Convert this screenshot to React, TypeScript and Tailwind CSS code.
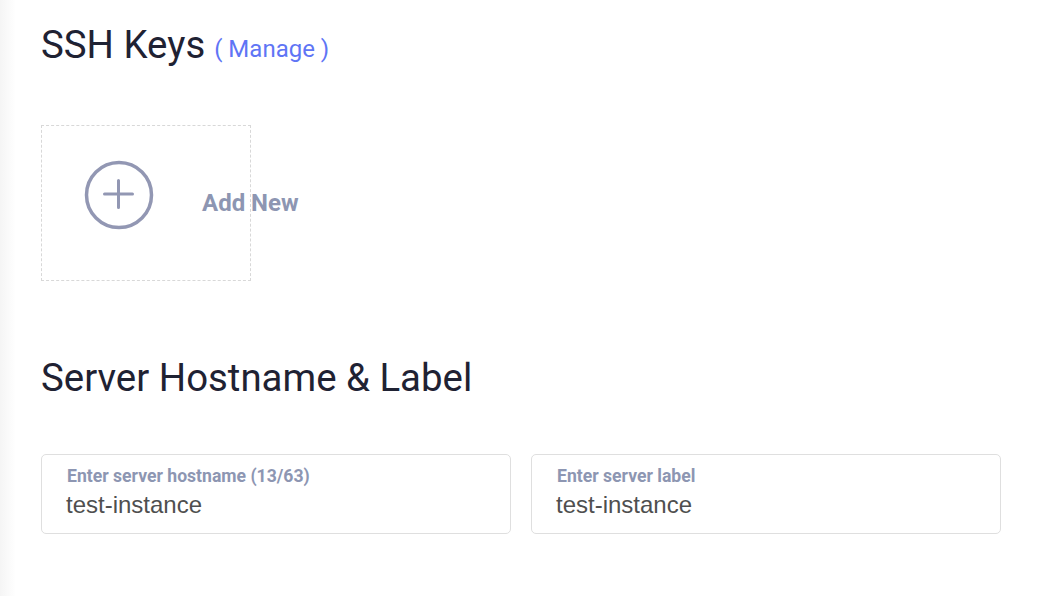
export default function App() {
  return (
    <main className="relative h-[596px] w-[1042px] overflow-hidden bg-white font-['Roboto',sans-serif]">
      {/* sidebar shadow on the left edge */}
      <div className="absolute inset-y-0 left-0 w-[16px] bg-gradient-to-r from-[#f5f5f5] to-white" />

      <div className="relative flex flex-col pl-[41px] pr-[41px] pt-[22px]">
        <div className="flex items-center">
          <h2 className="text-[38.4px] leading-[46px] font-normal text-[#1f2233]">SSH Keys</h2>
          <a href="#" className="ml-[9px] mt-[8px] text-[24px] leading-[32px] text-[#5f75f5]">( Manage )</a>
        </div>

        <div className="mt-[57px] flex h-[156px] w-[210px] border border-dashed border-[#d8d8d8] pl-[42px]">
          <svg className="mt-[34px] h-[70px] w-[70px] shrink-0" viewBox="0 0 70 70" fill="none" stroke="#9297b3">
            <circle cx="35" cy="35" r="32.5" strokeWidth="3.5" />
            <path d="M34.5 20.5v27M20.5 34h28" strokeWidth="3" strokeLinecap="round" />
          </svg>
          <span className="ml-[48px] mt-[62px] shrink-0 text-[24px] leading-[30px] font-bold text-[#8d96b2]">Add New</span>
        </div>

        <h2 className="mt-[74px] text-[38.4px] leading-[46px] font-normal text-[#1f2233]">Server Hostname &amp; Label</h2>

        <div className="mt-[53px] grid grid-cols-2 gap-[20px]">
          <div className="h-[80px] rounded-[5px] border border-[#dfdfdf] pl-[24px] pr-[25px] pt-[10px]">
            <div className="pl-[1px] text-[17.6px] leading-[22px] font-bold text-[#8d96b2]">Enter server hostname (13/63)</div>
            <div className="mt-[2px] font-['Liberation_Sans',sans-serif] text-[24px] leading-[32px] text-[#4f4f4f]">test-instance</div>
          </div>
          <div className="h-[80px] rounded-[5px] border border-[#dfdfdf] pl-[24px] pr-[25px] pt-[10px]">
            <div className="pl-[1px] text-[17.6px] leading-[22px] font-bold text-[#8d96b2]">Enter server label</div>
            <div className="mt-[2px] font-['Liberation_Sans',sans-serif] text-[24px] leading-[32px] text-[#4f4f4f]">test-instance</div>
          </div>
        </div>
      </div>
    </main>
  );
}
